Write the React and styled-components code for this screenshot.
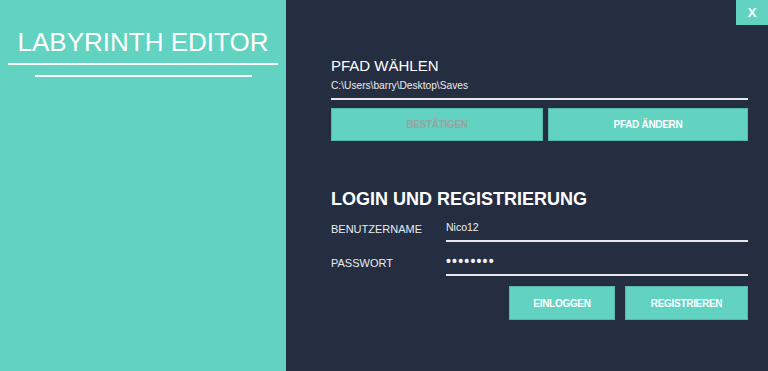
import styled, { createGlobalStyle } from "styled-components";

const teal = "#62d3c0";
const navy = "#252e41";

const GlobalStyle = createGlobalStyle`
  html, body {
    margin: 0;
    padding: 0;
    background: ${navy};
    font-family: "Liberation Sans", Arial, sans-serif;
  }
`;

const Window = styled.div`
  display: flex;
  width: 768px;
  height: 371px;
  overflow: hidden;
`;

const Sidebar = styled.div`
  width: 286px;
  flex-shrink: 0;
  background: ${teal};
  display: flex;
  flex-direction: column;
  align-items: center;
  padding-top: 27px;
  box-sizing: border-box;
`;

const Title = styled.h1`
  margin: 0;
  color: #fff;
  font-weight: normal;
  font-size: 26px;
  line-height: 30px;
`;

const Rule = styled.div`
  height: 2px;
  background: #fff;
  width: ${(p) => p.$width}px;
  margin-top: ${(p) => p.$gap}px;
`;

const Main = styled.div`
  flex: 1;
  position: relative;
  background: ${navy};
  padding: 56px 20px 0 45px;
  box-sizing: border-box;
  display: flex;
  flex-direction: column;
`;

const CloseButton = styled.button`
  position: absolute;
  top: 0;
  right: 0;
  width: 32px;
  height: 25px;
  border: none;
  background: ${teal};
  color: #fff;
  font-family: inherit;
  font-weight: bold;
  font-size: 13px;
  padding: 0;
`;

const SectionTitle = styled.h2`
  margin: 0;
  color: #fff;
  font-size: ${(p) => (p.$big ? "18px" : "15px")};
  font-weight: ${(p) => (p.$big ? "bold" : "normal")};
  line-height: 20px;
`;

const PathField = styled.div`
  margin-top: 3px;
  color: #e8ecef;
  font-size: 10.2px;
  line-height: 14px;
  padding-bottom: 5px;
  border-bottom: 2px solid #e6e8ea;
`;

const ButtonRow = styled.div`
  display: flex;
  gap: ${(p) => p.$gap}px;
  margin-top: ${(p) => p.$top}px;
  justify-content: flex-end;
`;

const ActionButton = styled.button`
  width: ${(p) => (p.$width ? `${p.$width}px` : "auto")};
  flex: ${(p) => (p.$width ? "none" : 1)};
  height: ${(p) => p.$height}px;
  background: ${teal};
  border: 1px solid #56b8a8;
  color: ${(p) => (p.$disabled ? "#97a3a2" : "#fff")};
  font-family: inherit;
  font-weight: bold;
  font-size: 10px;
  letter-spacing: -0.3px;
  padding: 0;
`;

const Login = styled.div`
  margin-top: 48px;
  display: flex;
  flex-direction: column;
`;

const FieldRow = styled.div`
  display: flex;
  align-items: flex-start;
  margin-top: ${(p) => p.$top}px;
`;

const Label = styled.div`
  width: 115px;
  color: #e8ecef;
  font-size: 11px;
  line-height: 14px;
  padding-top: 2px;
`;

const Input = styled.div`
  flex: 1;
  color: #eef1f3;
  font-size: ${(p) => (p.$secret ? "14px" : "10.5px")};
  font-weight: ${(p) => (p.$secret ? "bold" : "normal")};
  letter-spacing: ${(p) => (p.$secret ? "1.2px" : "0")};
  line-height: 14px;
  height: 14px;
  padding-bottom: 6px;
  border-bottom: 2px solid #e6e8ea;
`;

export default function App() {
  return (
    <Window>
      <GlobalStyle />
      <Sidebar>
        <Title>LABYRINTH EDITOR</Title>
        <Rule $width={270} $gap={6} />
        <Rule $width={217} $gap={10} />
      </Sidebar>
      <Main>
        <CloseButton>X</CloseButton>
        <SectionTitle>PFAD WÄHLEN</SectionTitle>
        <PathField>C:\Users\barry\Desktop\Saves</PathField>
        <ButtonRow $gap={5} $top={8}>
          <ActionButton $height={33} $disabled>BESTÄTIGEN</ActionButton>
          <ActionButton $height={33} $width={200}>PFAD ÄNDERN</ActionButton>
        </ButtonRow>
        <Login>
          <SectionTitle $big>LOGIN UND REGISTRIERUNG</SectionTitle>
          <FieldRow $top={11}>
            <Label>BENUTZERNAME</Label>
            <Input>Nico12</Input>
          </FieldRow>
          <FieldRow $top={12}>
            <Label>PASSWORT</Label>
            <Input $secret>••••••••</Input>
          </FieldRow>
          <ButtonRow $gap={10} $top={10}>
            <ActionButton $height={34} $width={106}>EINLOGGEN</ActionButton>
            <ActionButton $height={34} $width={123}>REGISTRIEREN</ActionButton>
          </ButtonRow>
        </Login>
      </Main>
    </Window>
  );
}
